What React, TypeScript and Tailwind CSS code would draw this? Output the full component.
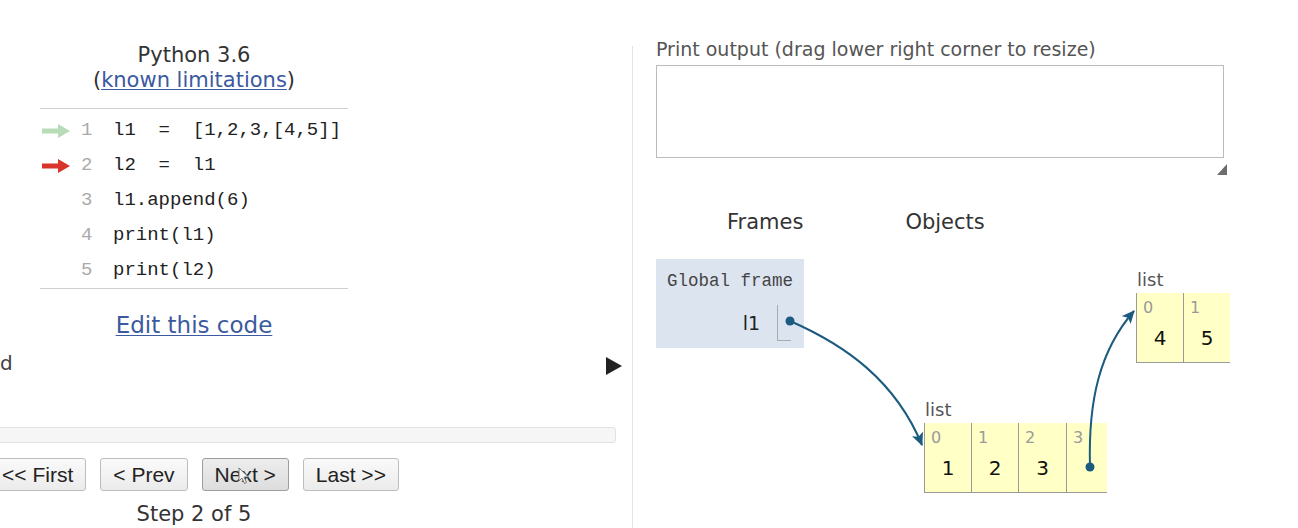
import React from 'react';

const CODE_LINES = [
  { num: 1, text: 'l1  =  [1,2,3,[4,5]]', arrow: 'prev' },
  { num: 2, text: 'l2  =  l1', arrow: 'next' },
  { num: 3, text: 'l1.append(6)', arrow: null },
  { num: 4, text: 'print(l1)', arrow: null },
  { num: 5, text: 'print(l2)', arrow: null },
] as const;

const NAV_BUTTONS = ['<< First', '< Prev', 'Next >', 'Last >>'];

function LineArrow({ color }: { color: string }) {
  return (
    <svg width="28" height="14" viewBox="0 0 28 14">
      <rect x="0" y="4.5" width="17" height="5" fill={color} />
      <path d="M16 0 L28 7 L16 14 Z" fill={color} />
    </svg>
  );
}

function ListBox({ cells, widths }: { cells: string[]; widths: number[] }) {
  return (
    <div className="flex h-[70px]">
      {cells.map((value, i) => (
        <div
          key={i}
          className="flex flex-col border-b border-l border-[#9a9a9a] bg-[#ffffc6]"
          style={{ width: widths[i] }}
        >
          <span className="pl-[6px] pt-[5px] text-[16px] leading-[19px] text-[#9a9a9a]">{i}</span>
          <span className="pt-[9px] text-center text-[20px] leading-[24px] text-[#111]">{value}</span>
        </div>
      ))}
    </div>
  );
}

export default function App() {
  return (
    <div className="relative flex h-[528px] w-[1298px] overflow-hidden bg-white font-['DejaVu_Sans',sans-serif] text-[#333]">
      {/* code pane */}
      <div className="relative flex w-[632px] shrink-0 flex-col">
        <div className="flex w-[388px] flex-col items-center pt-[43px]">
          <p className="text-[21px] leading-[25px]">Python 3.6</p>
          <p className="text-[21px] leading-[25px]">
            (<span className="text-[#3b5aa0] underline decoration-1 underline-offset-2">known limitations</span>)
          </p>
          <div className="mt-[15px] w-[308px] border-y border-[#cfcfcf] pt-[4px]">
            {CODE_LINES.map((line) => (
              <div key={line.num} className="flex h-[35px] items-center font-['Liberation_Mono',monospace] text-[19px]">
                <div className="flex w-[40px] pl-[2px]">
                  {line.arrow === 'prev' && <LineArrow color="#b8dcb8" />}
                  {line.arrow === 'next' && <LineArrow color="#d9342b" />}
                </div>
                <span className="w-[32px] pl-[1px] text-[#aaa]">{line.num}</span>
                <span className="whitespace-pre pl-[1px] text-[#222]">{line.text}</span>
              </div>
            ))}
          </div>
          <p className="mt-[24px] text-[23px] leading-[25px] text-[#3b5aa0] underline decoration-1 underline-offset-2">
            Edit this code
          </p>
        </div>
        <p className="mt-[14px] text-[20px] leading-[22px] text-[#444]">d</p>

        <div className="mt-[53px] h-[16px] w-[616px] rounded-r-[4px] border border-l-0 border-[#e2e2e2] bg-[#f6f6f6]" />

        <div className="mt-[15px] flex w-[388px] justify-center gap-[14px] font-['Liberation_Sans',sans-serif]">
          {NAV_BUTTONS.map((label) => (
            <div
              key={label}
              className={
                label === 'Next >'
                  ? 'flex h-[33px] shrink-0 items-center rounded-[3px] border border-[#9d9d9d] bg-gradient-to-b from-[#ededed] to-[#dddddd] px-[12px] text-[21px] text-[#222]'
                  : 'flex h-[33px] shrink-0 items-center rounded-[3px] border border-[#bdbdbd] bg-gradient-to-b from-[#fafafa] to-[#ebebeb] px-[12px] text-[21px] text-[#222]'
              }
            >
              {label}
            </div>
          ))}
        </div>
        <p className="mt-[11px] w-[388px] text-center text-[21px] leading-[24px]">Step 2 of 5</p>

        {/* play overlay */}
        <svg className="absolute left-[606px] top-[357px]" width="16" height="18" viewBox="0 0 16 18">
          <path d="M0 0 L16 9 L0 18 Z" fill="#222" />
        </svg>
        {/* mouse pointer */}
        <svg className="absolute left-[238px] top-[467px]" width="12" height="18" viewBox="0 0 12 18">
          <path d="M1 1 L1 14 L4 11 L6.5 16.5 L8.5 15.5 L6 10 L10.5 10 Z" fill="#f4f4f4" stroke="#777" strokeWidth="1" />
        </svg>
      </div>

      {/* visualisation pane */}
      <div className="flex flex-1">
        <div className="mt-[46px] w-px self-stretch bg-[#e3e3e3]" />
        <div className="flex flex-col pl-[23px] pt-[39px]">
          <p className="whitespace-nowrap text-[19px] leading-[20px] text-[#555]">Print output (drag lower right corner to resize)</p>
          <div className="mt-[6px] h-[93px] w-[568px] border border-[#bcbcbc] bg-white" />
          <div className="mt-[6px] flex w-[571px] justify-end">
            <svg width="10" height="11" viewBox="0 0 10 11">
              <path d="M10 0 L10 11 L0 11 Z" fill="#6d6d6d" />
            </svg>
          </div>

          <div className="mt-[35px] flex text-[21px] leading-[24px] text-[#333]">
            <span className="ml-[71px]">Frames</span>
            <span className="ml-[102px]">Objects</span>
          </div>

          <div className="mt-[25px] flex h-[89px] w-[148px] flex-col bg-[#dce4f0]">
            <p className="pl-[11px] pt-[12px] font-['Liberation_Mono',monospace] text-[17.5px] leading-[20px] text-[#444]">
              Global frame
            </p>
            <div className="mt-[14px] flex items-center justify-end pr-[13px]">
              <span className="text-[19px] text-[#222]">l1</span>
              <div className="ml-[17px] h-[36px] w-[14px] border-b border-l border-[#aaa]" />
            </div>
          </div>
        </div>
      </div>

      {/* heap objects */}
      <div className="absolute left-[924px] top-[398px] flex flex-col">
        <span className="pl-[1px] text-[18px] leading-[23px] text-[#555]">list</span>
        <div className="mt-[2px]">
          <ListBox cells={['1', '2', '3', '']} widths={[47, 47, 48, 41]} />
        </div>
      </div>
      <div className="absolute left-[1136px] top-[268px] flex flex-col">
        <span className="pl-[1px] text-[18px] leading-[23px] text-[#555]">list</span>
        <div className="mt-[2px]">
          <ListBox cells={['4', '5']} widths={[47, 47]} />
        </div>
      </div>

      {/* pointer arrows */}
      <svg className="pointer-events-none absolute left-0 top-0" width="1298" height="528" viewBox="0 0 1298 528">
        <defs>
          <marker id="head" markerWidth="14" markerHeight="12" refX="12" refY="6" orient="auto" markerUnits="userSpaceOnUse">
            <path d="M0 0 L13 6 L0 12 L3 6 Z" fill="#1b5b80" />
          </marker>
        </defs>
        <path d="M790 321 C 845 345 895 380 922 445" fill="none" stroke="#1b5b80" strokeWidth="2" markerEnd="url(#head)" />
        <path d="M1090 467 C 1088 400 1100 350 1134 311" fill="none" stroke="#1b5b80" strokeWidth="2" markerEnd="url(#head)" />
        <circle cx="790" cy="321" r="4.5" fill="#1b5b80" />
        <circle cx="1090" cy="467" r="4.5" fill="#1b5b80" />
      </svg>
    </div>
  );
}
